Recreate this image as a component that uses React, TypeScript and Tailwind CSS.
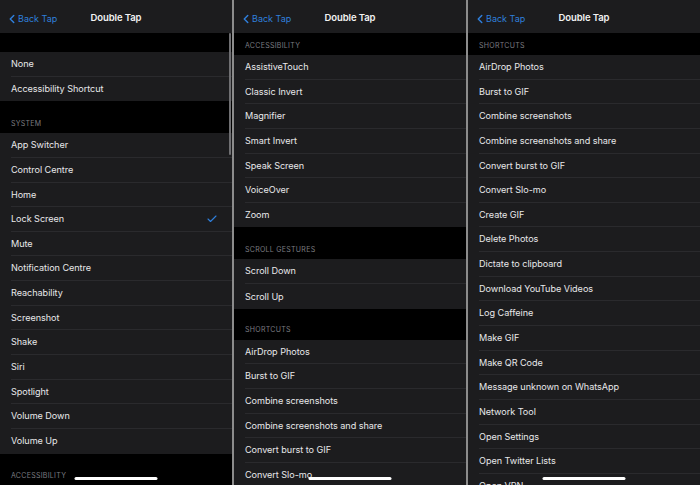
import { Check, ChevronLeft } from 'lucide-react';

type Section = { title?: string; head: string; items: string[]; checked?: string };

const panels: { sections: Section[]; scrollbar?: boolean }[] = [
  {
    scrollbar: true,
    sections: [
      { head: 'h-[19px]', items: ['None', 'Accessibility Shortcut'] },
      {
        title: 'System',
        head: 'h-[32px]',
        checked: 'Lock Screen',
        items: [
          'App Switcher',
          'Control Centre',
          'Home',
          'Lock Screen',
          'Mute',
          'Notification Centre',
          'Reachability',
          'Screenshot',
          'Shake',
          'Siri',
          'Spotlight',
          'Volume Down',
          'Volume Up',
        ],
      },
      { title: 'Accessibility', head: 'h-[32px]', items: [] },
    ],
  },
  {
    sections: [
      {
        title: 'Accessibility',
        head: 'h-[22px]',
        items: ['AssistiveTouch', 'Classic Invert', 'Magnifier', 'Smart Invert', 'Speak Screen', 'VoiceOver', 'Zoom'],
      },
      { title: 'Scroll Gestures', head: 'h-[32px]', items: ['Scroll Down', 'Scroll Up'] },
      {
        title: 'Shortcuts',
        head: 'h-[31px]',
        items: [
          'AirDrop Photos',
          'Burst to GIF',
          'Combine screenshots',
          'Combine screenshots and share',
          'Convert burst to GIF',
          'Convert Slo-mo',
        ],
      },
    ],
  },
  {
    sections: [
      {
        title: 'Shortcuts',
        head: 'h-[22px]',
        items: [
          'AirDrop Photos',
          'Burst to GIF',
          'Combine screenshots',
          'Combine screenshots and share',
          'Convert burst to GIF',
          'Convert Slo-mo',
          'Create GIF',
          'Delete Photos',
          'Dictate to clipboard',
          'Download YouTube Videos',
          'Log Caffeine',
          'Make GIF',
          'Make QR Code',
          'Message unknown on WhatsApp',
          'Network Tool',
          'Open Settings',
          'Open Twitter Lists',
          'Open VPN',
        ],
      },
    ],
  },
];

function Panel({ sections, scrollbar }: { sections: Section[]; scrollbar?: boolean }) {
  return (
    <div className="relative w-[232px] h-[485px] overflow-hidden bg-black flex flex-col">
      <div className="h-[33px] shrink-0 bg-[#1c1c1e] flex items-center relative pt-[4px]">
        <div className="flex items-center text-[#2f7fdc] text-[9px] pl-[5px]">
          <ChevronLeft size={14} strokeWidth={2.5} className="-mr-[1px]" />
          <span>Back Tap</span>
        </div>
        <div className="absolute left-0 right-0 top-[4px] bottom-0 flex items-center justify-center text-[9.5px] font-semibold tracking-[-0.01em] text-[#f2f2f2]">
          Double Tap
        </div>
      </div>

      {sections.map((s, i) => (
        <div key={i}>
          <div className={`${s.head} flex items-end pb-[4px] pl-[11px]`}>
            {s.title && (
              <span className="text-[7px] uppercase tracking-[0.04em] text-[#7c7c80]">{s.title}</span>
            )}
          </div>
          <div className="bg-[#1c1c1e]">
            {s.items.map((item, j) => (
              <div key={item} className="h-[24.65px] pl-[11px] flex">
                <div
                  className={
                    j < s.items.length - 1
                      ? 'flex-1 flex items-center justify-between pr-[14px] border-b border-[#2a2a2d] text-[9.1px] tracking-[-0.005em] text-[#e8e8ea]'
                      : 'flex-1 flex items-center justify-between pr-[14px] text-[9.1px] tracking-[-0.005em] text-[#e8e8ea]'
                  }
                >
                  <span>{item}</span>
                  {s.checked === item && <Check size={12} strokeWidth={2.2} className="text-[#2f7fdc]" />}
                </div>
              </div>
            ))}
          </div>
        </div>
      ))}

      {scrollbar && <div className="absolute right-[1px] top-[33px] w-[2px] h-[122px] rounded-full bg-[#6f6f72]" />}
      <div className="absolute left-1/2 -translate-x-1/2 bottom-[5px] w-[83px] h-[3px] rounded-full bg-white" />
    </div>
  );
}

export default function App() {
  return (
    <div className="w-[700px] h-[485px] flex bg-[#8c8c8c] gap-[2px] overflow-hidden" style={{ fontFamily: 'Inter, "Liberation Sans", sans-serif' }}>
      {panels.map((p, i) => (
        <Panel key={i} sections={p.sections} scrollbar={p.scrollbar} />
      ))}
    </div>
  );
}
